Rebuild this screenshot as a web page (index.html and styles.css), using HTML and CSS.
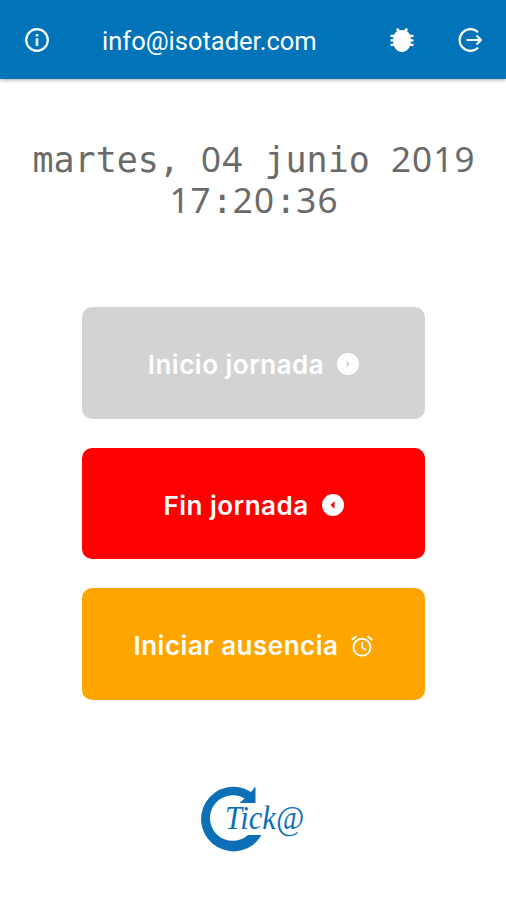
FILE: index.html
```
<!DOCTYPE html>
<html lang="es">
<head>
    <meta charset="UTF-8">
    <meta name="viewport" content="width=device-width, initial-scale=1.0">
    <title>Tick@</title>
    <link rel="stylesheet" href="styles.css">
</head>
<body>
    <header class="toolbar">
        <svg class="icon" viewBox="0 0 24 24">
            <circle cx="12" cy="12" r="10.8" fill="none" stroke="#fff" stroke-width="2.2"/>
            <path d="M10.6 6h2.800v2.500h-2.800zM10.600 10.300h2.800V18h-2.800z" opacity=".85"/>
        </svg>
        <span class="user">info@isotader.com</span>
        <svg class="icon bug" viewBox="0 0 24 24">
            <path d="M23.500 9V6.700H20a9 9 0 0 0-3-3.500L18 1 16 0l-2 2.200a9 9 0 0 0-4 0L8 0 6 1l1 2.200A9 9 0 0 0 4 6.700H.500V9h2.700v2.200H.500v2.300h2.700v2.200H.500V18H4c1.500 3.700 4.500 6 8 6s6.500-2.300 8-6h3.500v-2.300h-2.700v-2.200h2.700v-2.300h-2.700V9z"/>
        </svg>
        <svg class="icon" viewBox="0 0 24 24" fill="none" stroke="#fff" stroke-width="2.200">
            <path d="M20 4.300A10.800 10.800 0 1 0 20 19.700M8.500 12h14M18.500 7.500 23 12l-4.500 4.500"/>
        </svg>
    </header>

    <main>
        <div class="clock">
            <div>martes, <span class="digits">04</span> junio <span class="digits">2019</span></div>
            <div><span class="digits">17</span>:<span class="digits">20</span>:<span class="digits">36</span></div>
        </div>

        <div class="buttons">
            <button class="start" disabled>
                <span>Inicio jornada</span>
                <svg class="icon" viewBox="0 0 22 22">
                    <path fill-rule="evenodd" d="M11 0a11 11 0 1 0 0 22 11 11 0 0 0 0-22zM9.500 7.500 13 11l-3.500 3.500z"/>
                </svg>
            </button>
            <button class="end">
                <span>Fin jornada</span>
                <svg class="icon" viewBox="0 0 22 22">
                    <path fill-rule="evenodd" d="M11 0a11 11 0 1 0 0 22 11 11 0 0 0 0-22zM12.500 7.300 8.500 11l4 3.700z"/>
                </svg>
            </button>
            <button class="absence">
                <span>Iniciar ausencia</span>
                <svg class="icon" viewBox="0 0 22 22" fill="none" stroke="#fff" stroke-width="1.900">
                    <circle cx="11" cy="12.300" r="8.500"/>
                    <path d="M11 7v5.500l4 2.500M.700 5 5.600.900M21.300 5 16.400.900"/>
                </svg>
            </button>
        </div>
    </main>

    <footer>
        <svg class="logo" viewBox="0 0 120 80">
            <path d="M55.500 1.500 51 7A32.300 32.300 0 1 0 61.500 50H48A22.800 22.800 0 1 1 44.500 13.500L39.500 18H55.500z"/>
            <text x="25" y="44" textLength="79" lengthAdjust="spacingAndGlyphs">Tick@</text>
        </svg>
    </footer>
</body>
</html>
```
FILE: styles.css
```
body {
    margin: 0;
    min-height: 900px;
    background-color: #fff;
    font-family: Roboto, sans-serif;
}
.toolbar {
    display: flex;
    align-items: center;
    height: 79px;
    padding: 1px 24px 0 25px;
    box-sizing: border-box;
    background-color: #0073b9;
    color: #fff;
    box-shadow: 0 1px 4px rgba(0, 0, 0, 0.35);
}
.icon {
    width: 24px;
    height: 24px;
    fill: #fff;
    flex: none;
}
.icon[fill="none"] {
    fill: none;
}
.user {
    flex: 1;
    margin-left: 53px;
    padding-top: 2px;
    font-size: 25.5px;
}
.bug {
    margin-right: 44px;
}
.clock {
    margin-top: 61px;
    padding-left: 2px;
    font-family: "DejaVu Sans Mono", monospace;
    font-size: 35px;
    line-height: 41px;
    text-align: center;
    white-space: nowrap;
    color: #6a6a6a;
}
.digits {
    font-family: "Noto Sans", sans-serif;
    line-height: 1px;
    letter-spacing: 1.15px;
}
.buttons {
    display: flex;
    flex-direction: column;
    gap: 29px;
    width: 343px;
    margin: 85px auto 0 82px;
}
button {
    display: flex;
    align-items: center;
    justify-content: center;
    gap: 13px;
    height: 111.7px;
    padding: 3px 0 0;
    border: none;
    border-radius: 10px;
    color: #fff;
    font-family: Inter, sans-serif;
    font-size: 26px;
    font-weight: 600;
    letter-spacing: 0.5px;
}
button .icon {
    width: 22px;
    height: 22px;
}
.start {
    background-color: #d3d3d3;
}
.end {
    background-color: #f00;
}
.absence {
    background-color: #ffa500;
}
.logo {
    display: block;
    width: 120px;
    height: 80px;
    margin: 85px 0 0 200px;
    font-family: "Liberation Serif", serif;
    font-size: 34px;
    font-style: italic;
    fill: #0d6fb8;
}
```
